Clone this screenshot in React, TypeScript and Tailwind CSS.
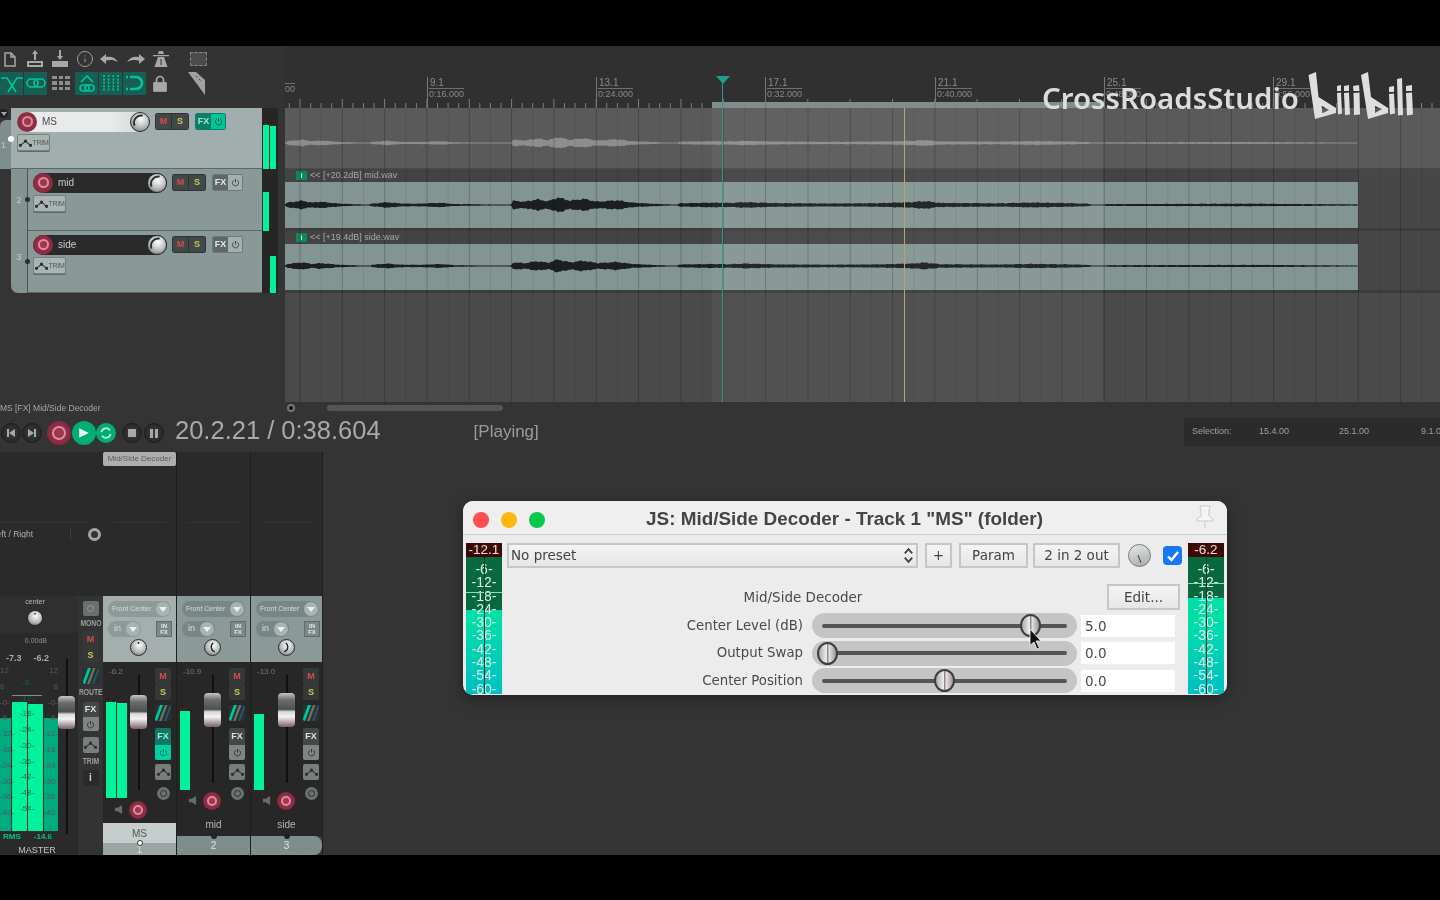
import React from "react";
import { Info } from "lucide-react";

const ENV: [number, number][] = [
  [285, 0],[287, 2.5],[302, 4.5],[312, 2.5],[320, 3.5],[340, 1.5],[362, 0.6],[368, 0],[372, 1.5],[388, 3],[400, 1.6],[420, 1.4],[440, 2.4],[455, 1],[505, 0.5],[511, 0],[513, 4.5],[525, 3.5],[537, 6],[548, 4],[558, 8],[570, 4.5],[583, 6.5],[598, 3.5],[617, 5],[632, 2.5],[660, 1],[672, 0.6],[677, 0],[679, 1.8],[713, 2.5],[730, 2.2],[745, 3],[775, 2],[830, 1.6],[860, 1.8],[880, 2],[912, 3],[925, 4.2],[940, 2.2],[1000, 1.8],[1030, 2.6],[1060, 2.2],[1088, 1.4],[1095, 0],[1104, 0],[1106, 1],[1180, 1.2],[1250, 1.4],[1300, 1],[1358, 0.7],
];
function ampAt(x: number) {
  for (let i = 1; i < ENV.length; i++) {
    if (x <= ENV[i][0]) {
      const [a, av] = ENV[i - 1];
      const [b, bv] = ENV[i];
      return av + ((bv - av) * (x - a)) / (b - a);
    }
  }
  return 0;
}
function wavePath(seed: number, scale: number, mid: number) {
  const top: string[] = [];
  const bottom: string[] = [];
  for (let x = 285; x <= 1358; x += 1.5) {
    const n = 0.85 + 0.15 * Math.sin(x * 0.9 + seed) * Math.cos(x * 0.37 + seed * 2);
    const a = Math.max(ampAt(x) * scale * n, 0.45);
    top.push(`${(x - 285).toFixed(1)} ${(mid - a).toFixed(1)}`);
    bottom.unshift(`${(x - 285).toFixed(1)} ${(mid + a * 0.95).toFixed(1)}`);
  }
  return "M" + top.join("L") + "L" + bottom.join("L") + "Z";
}
function gridPaths() {
  let major = "";
  let minor = "";
  for (let i = 0; i < 28; i++) {
    const x = 15 + i * 42.33;
    major += `M${x.toFixed(1)} 0V294`;
    minor += `M${(x + 21.16).toFixed(1)} 0V294`;
  }
  return { major, minor };
}
function rulerTicks() {
  let t = "";
  for (let i = 0; i < 110; i++) {
    const x = 4.4 + i * 10.58;
    const tall = i % 4 === 1;
    t += `M${x.toFixed(1)} ${tall ? 21 : 25}V30`;
  }
  return t;
}

const Knob = ({ className, dark, arc }: { className: string; dark?: boolean; arc?: "l" | "r" | "t" }) => (
  <div className={`rounded-full shrink-0 border border-[#2a2a2a] bg-[radial-gradient(circle_at_55%_35%,#ffffff,#b4b8b8_55%,#5d6161)] ${className}`}>
    <svg viewBox="0 0 20 20" className="w-full h-full">
      {arc === "l" && <path d="M11 4A6.5 6.5 0 0 0 13 15.5" fill="none" stroke="#222" strokeWidth="1.8" />}
      {arc === "r" && <path d="M9 4A6.5 6.5 0 0 1 7 15.5" fill="none" stroke="#222" strokeWidth="1.8" />}
      {arc === "t" && <circle cx="10" cy="4" r="1.2" fill="#222" />}
      {dark && <path d="M4 14A8 8 0 0 1 13 3" fill="none" stroke="#2a2a2a" strokeWidth="2" />}
    </svg>
  </div>
);

const Rec = ({ className }: { className: string }) => (
  <div className={`rounded-full shrink-0 bg-[radial-gradient(circle,#a33a56,#7c2036)] flex items-center justify-center ${className}`}>
    <div className="w-[55%] h-[55%] rounded-full border-2 border-[#dd8d9f]" />
  </div>
);

const MS = () => (
  <div className="flex rounded-[2px] overflow-hidden border border-[#2d3433] font-bold text-[9px] leading-none shrink-0">
    <div className="w-4 h-[15px] bg-[#414847] text-[#d94a4a] flex items-center justify-center border-r border-[#2d3433]">M</div>
    <div className="w-4 h-[15px] bg-[#414847] text-[#cfc655] flex items-center justify-center">S</div>
  </div>
);

const Power = ({ color }: { color: string }) => (
  <svg viewBox="0 0 10 10" className="w-[9px] h-[9px]" fill="none" stroke={color} strokeWidth="1.1">
    <path d="M3 2.6A3.4 3.4 0 1 0 7 2.6M5 1V5" />
  </svg>
);

const FxBtn = ({ on }: { on?: boolean }) => (
  <div className={`flex rounded-[2px] overflow-hidden font-bold text-[9px] leading-none border shrink-0 ${on ? "border-[#0a7f67]" : "border-[#6d7a78]"}`}>
    <div className={`w-[15px] h-[15px] flex items-center justify-center ${on ? "bg-[#0b7f66] text-[#a6e8d8]" : "bg-[#5e6867] text-[#e5e9e8]"}`}>FX</div>
    <div className={`w-[14px] h-[15px] flex items-center justify-center ${on ? "bg-[#00c49a]" : "bg-[#a4afae]"}`}>
      <Power color={on ? "#075b4a" : "#3f4645"} />
    </div>
  </div>
);

const TrimIcon = () => (
  <svg viewBox="0 0 14 8" className="w-[13px] h-[8px]" fill="none" stroke="#2d3130" strokeWidth="1.1">
    <path d="M1 7L7 2L13 7" />
    <circle cx="1.5" cy="6.5" r="1.2" fill="#2d3130" />
    <circle cx="7" cy="2" r="1.2" fill="#2d3130" />
    <circle cx="12.5" cy="6.5" r="1.2" fill="#2d3130" />
  </svg>
);

const Trim = () => (
  <div className="w-[33px] h-[17px] rounded-[2px] bg-[#a9b4b3] border border-[#748280] shadow-[0_1px_0_#5d6a68] flex items-center justify-center gap-[1px] text-[7px] text-[#4e5655] leading-none">
    <TrimIcon />
    <span className="tracking-[-0.3px]">TRIM</span>
  </div>
);

const TrackRow = ({ name, num, sel, meter }: { name: string; num: string; sel?: boolean; meter: React.ReactNode }) => (
  <div className={`flex relative ${sel ? "h-[61px]" : "h-[62px]"}`}>
    {sel ? (
      <>
        <div className="absolute left-[-1px] top-[1px] w-[9px] h-[9px] rounded-full bg-[#1f1f1f] flex items-center justify-center">
          <div className="w-0 h-0 border-x-[3px] border-x-transparent border-t-[4px] border-t-[#a5a5a5]" />
        </div>
        <div className="w-[11px] mt-[12px] bg-[#7e8e8c] rounded-tl-[6px] flex flex-col text-[9px] text-[#c3cccb] pt-[19px] pl-[1px]">
          <span>{num}</span>
        </div>
        <div className="absolute left-[8px] top-[28px] w-[6px] h-[6px] rounded-full bg-white" />
      </>
    ) : (
      <>
        <div className="w-[11px] shrink-0" />
        <div className={`w-[17px] shrink-0 bg-[#83938f] border-r border-[#4b5553] flex flex-col items-center text-[9px] text-[#c6cfcd] ${num === "2" ? "pt-[25px]" : "pt-[20px] rounded-bl-[7px]"}`}>
          <span>{num}</span>
        </div>
        <div className="absolute left-[25px] top-[28px] w-[5px] h-[5px] rounded-full bg-[#2a2f2e]" />
      </>
    )}
    <div className={`flex-1 border-b border-[#5b6765] ${sel ? "bg-[#a2aead] pl-[6px] pt-[3px]" : "bg-[#899997] pl-[5px] pt-[3px]"}`}>
      <div className="flex items-center h-[21px]">
        <div className={`flex items-center rounded-full h-[20px] ${sel ? "w-[133px] bg-[linear-gradient(90deg,#e9eaea_70%,#d9dbdb_90%,#a2aead)] text-[#4b4b4b]" : "w-[134px] bg-[#2a2a2a] text-[#c9cccc]"}`}>
          <Rec className="w-[20px] h-[20px]" />
          <span className="text-[10px] ml-[5px] flex-1">{name}</span>
          <Knob className="w-[20px] h-[20px]" dark />
        </div>
        <div className="flex items-center gap-[6px] ml-[5px]">
          <MS />
          <FxBtn on={sel} />
        </div>
      </div>
      <div className="mt-[2px]">
        <Trim />
      </div>
    </div>
    <div className="w-[16px] shrink-0 bg-[#262626] flex items-end gap-[1px] pl-[1px] overflow-hidden">{meter}</div>
    <div className="w-[7px] shrink-0" />
  </div>
);

const Bright = ({ className }: { className: string }) => <div className={`w-[6px] bg-[#00f29a] ${className}`} />;

const TB = ({ on, children }: { on?: boolean; children: React.ReactNode }) => (
  <div className={`w-[23px] h-[23px] flex items-center justify-center shrink-0 ${on ? "bg-[#175f53]" : ""}`}>{children}</div>
);

const Toolbar = () => (
  <div className="h-[62px] bg-[#333333] text-[#a8a8a8] pt-[4px] relative">
    <div className="flex items-center h-[18px]">
      <div className="w-[20px] flex justify-center shrink-0">
        <svg viewBox="0 0 12 15" className="w-[12px] h-[15px]" fill="none" stroke="#a8a8a8" strokeWidth="1.5"><path d="M1 1h6l4 4v9H1zM7 1v4h4" /></svg>
      </div>
      <div className="w-[30px] flex justify-center shrink-0">
        <svg viewBox="0 0 18 18" className="w-[18px] h-[18px]" fill="#a8a8a8"><path fillRule="evenodd" d="M9 0l3 4h-2v6H8V4H6zM1 11h16v6H1zM3 13v2h12v-2z" /></svg>
      </div>
      <div className="w-[20px] flex justify-center shrink-0">
        <svg viewBox="0 0 18 18" className="w-[18px] h-[18px]" fill="#a8a8a8"><path d="M8 0h2v6h2l-3 4-3-4h2zM1 11h16v6H1z" /></svg>
      </div>
      <div className="w-[30px] flex justify-center shrink-0"><Info size={18} strokeWidth={1.2} /></div>
      <div className="w-[18px] flex justify-center shrink-0">
        <svg viewBox="0 0 18 12" className="w-[18px] h-[12px] shrink-0" fill="#a8a8a8"><path d="M0 6L6 1V4C11 3 15 4 18 9C14 6.500 10 6.500 6 7.500V11Z" /></svg>
      </div>
      <div className="w-[36px] flex justify-center shrink-0">
        <svg viewBox="0 0 18 12" className="w-[18px] h-[12px] shrink-0 -scale-x-100" fill="#a8a8a8"><path d="M0 6L6 1V4C11 3 15 4 18 9C14 6.500 10 6.500 6 7.500V11Z" /></svg>
      </div>
      <div className="w-[14px] flex justify-center shrink-0">
        <svg viewBox="0 0 18 18" className="w-[18px] h-[18px] shrink-0" fill="#a8a8a8"><path fillRule="evenodd" d="M1 5h16v1.200H1zM6 4l1-3h4l1 3zM6 7h6l3.500 10H2.500zM8.500 9v6h1V9z" /></svg>
      </div>
      <div className="w-[17px] h-[14px] ml-[22px] bg-[#4b4b4b] border border-dashed border-[#8c8c8c] rounded-[1px] shrink-0" />
    </div>
    <div className="flex items-center mt-[3px] h-[24px]">
      <TB on>
        <svg viewBox="0 0 22 22" className="w-[22px] h-[22px]" fill="none" stroke="#00c79a" strokeWidth="1.6"><path d="M0 6h6l9 14M22 6h-6L7 20" /></svg>
      </TB>
      <div className="w-[1px]" />
      <TB on>
        <svg viewBox="0 0 22 22" className="w-[22px] h-[22px]" fill="none" stroke="#00c79a" strokeWidth="1.6"><rect x="2" y="7" width="11" height="8" rx="4" /><rect x="9" y="7" width="11" height="8" rx="4" /></svg>
      </TB>
      <div className="w-[5px]" />
      <div className="w-[18px] h-[14px] grid grid-cols-3 gap-[2px] shrink-0">
        {Array.from({ length: 9 }).map((_, i) => <div key={i} className="bg-[#8e8e8e]" />)}
      </div>
      <div className="w-[5px]" />
      <TB on>
        <svg viewBox="0 0 22 22" className="w-[22px] h-[22px]" fill="none" stroke="#00c79a" strokeWidth="1.6"><path d="M5 10l6-6 6 6" /><rect x="4" y="13" width="9" height="6" rx="3" /><rect x="9" y="13" width="9" height="6" rx="3" /></svg>
      </TB>
      <div className="w-[1px]" />
      <TB on>
        <svg viewBox="0 0 22 22" className="w-[22px] h-[22px]" stroke="#00c79a" strokeWidth="1.6" strokeDasharray="2 1.4"><path d="M4 3v16M8.600 3v16M13.300 3v16M18 3v16" /></svg>
      </TB>
      <div className="w-[1px]" />
      <TB on>
        <svg viewBox="0 0 22 22" className="w-[22px] h-[22px]" fill="none" stroke="#00c79a" strokeWidth="2.600"><path d="M6 5h6a6 6 0 0 1 0 12H6" /><path d="M2 5h2M2 17h2" /></svg>
      </TB>
      <div className="w-[2px]" />
      <div className="w-[23px] flex justify-center shrink-0">
        <svg viewBox="0 0 14 17" className="w-[14px] h-[17px]" fill="none" stroke="#a8a8a8" strokeWidth="1.700"><path d="M3.500 8V5a3.500 3.500 0 0 1 7 0v3" /><rect x="1" y="8" width="12" height="8" fill="#a8a8a8" /></svg>
      </div>
      <div className="w-[16px]" />
      <svg viewBox="0 0 19 25" className="w-[19px] h-[25px] shrink-0" fill="#a0a0a0"><path d="M1 1H9L18 9V24Z" /><path d="M9 5l1.500 1.500M12 8l1.500 1.500" stroke="#444" strokeWidth="1" /></svg>
    </div>
  </div>
);

const Ruler = () => {
  const marks = [
    ["9.1", "0:16.000", 142],
    ["13.1", "0:24.000", 311],
    ["17.1", "0:32.000", 480],
    ["21.1", "0:40.000", 650],
    ["25.1", "0:48.000", 819],
    ["29.1", "0:56.000", 988],
  ] as const;
  return (
    <div className="h-[62px] bg-[#303030] relative overflow-hidden">
      <svg className="absolute left-0 bottom-0 w-full h-[30px]" viewBox="0 0 1155 30" preserveAspectRatio="none">
        <path d={rulerTicks()} stroke="#7d7d7d" strokeWidth="1" fill="none" />
        <rect x="427" y="24" width="391" height="6" fill="#7f8e8c" />
      </svg>
      <div className="absolute left-0 top-[37px] text-[9px] leading-none text-[#8a8a8a] border-t border-[#707070] pt-[1px]">00</div>
      {marks.map(([a, b, x]) => (
        <div key={a} className="absolute top-[31px] bottom-0 border-l border-[#777] pl-[1px] text-[#8a8a8a]" style={{ left: x }}>
          <div className="text-[10px] leading-[11px] border-b border-[#6e6e6e] pl-[1px]">{a}</div>
          <div className="text-[9px] leading-[11px]">{b}</div>
        </div>
      ))}
    </div>
  );
};

const Clip = ({ label, wave }: { label: string; wave: string }) => (
  <div className="h-[62px] bg-[#474747] border-b-[3px] border-[#3c3c3c] flex flex-col">
    <div className="h-[13px] flex items-center pl-[11px] text-[9px] text-[#a8a8a8] bg-[#434343] w-[1073px]">
      <span className="w-[11px] h-[9px] bg-[#0d8a5c] text-[#c9f2e0] text-[7px] leading-[9px] text-center mr-[3px] font-bold">i</span>
      <span>{label}</span>
    </div>
    <div className="w-[1073px] flex-1 bg-[#839593]">
      <svg viewBox="0 0 1073 46" className="w-[1073px] h-[46px] block">
        <path d={wave} fill="#1c1f1f" />
      </svg>
    </div>
  </div>
);

const Arrange = () => {
  const g = gridPaths();
  return (
    <div className="flex-1 bg-[#4a4a4a] relative overflow-hidden">
      <div className="h-[61px] bg-[#5a5a5a] border-b border-[#4a4a4a]">
        <svg viewBox="0 0 1073 61" className="w-[1073px] h-[61px] block">
          <path d={wavePath(2, 0.85, 35)} fill="#8d8d8d" />
        </svg>
      </div>
      <Clip label="<< [+20.2dB] mid.wav" wave={wavePath(1, 1.1, 23)} />
      <Clip label="<< [+19.4dB] side.wav" wave={wavePath(4, 0.95, 22)} />
      <svg className="absolute left-0 top-0 w-[1155px] h-[294px]" viewBox="0 0 1155 294">
        <path d={g.minor} stroke="#000" strokeOpacity="0.08" strokeWidth="1" />
        <path d={g.major} stroke="#000" strokeOpacity="0.22" strokeWidth="1" />
        <rect x="427" y="0" width="391" height="294" fill="#fff" fillOpacity="0.045" />
      </svg>
      <div className="absolute left-[619px] top-0 bottom-0 w-[1px] bg-[#b8a75c]" />
    </div>
  );
};

const TBtn = ({ children, className }: { children: React.ReactNode; className?: string }) => (
  <div className={`w-[20px] h-[20px] rounded-full bg-[radial-gradient(circle,#3a3a3a,#232323)] border border-[#1c1c1c] flex items-center justify-center ${className ?? ""}`}>{children}</div>
);

const Transport = () => (
  <div className="h-[38px] flex items-center text-[#a8a8a8] relative">
    <div className="flex items-center gap-[1px] ml-[1px]">
      <TBtn><svg viewBox="0 0 10 10" className="w-[10px] h-[10px]" fill="#a8a8a8"><path d="M1 1h2v8H1zM9 1v8L3 5z" /></svg></TBtn>
      <TBtn><svg viewBox="0 0 10 10" className="w-[10px] h-[10px]" fill="#a8a8a8"><path d="M7 1h2v8H7zM1 1v8l6-4z" /></svg></TBtn>
    </div>
    <Rec className="w-[24px] h-[24px] ml-[5px]" />
    <div className="w-[24px] h-[24px] rounded-full bg-[#00ad73] flex items-center justify-center ml-[1px]">
      <svg viewBox="0 0 10 10" className="w-[12px] h-[12px]" fill="#eaf8f2"><path d="M1 1l8 4-8 4z" /></svg>
    </div>
    <div className="w-[20px] h-[20px] rounded-full bg-[#00ad73] flex items-center justify-center ml-[0px]">
      <svg viewBox="0 0 14 14" className="w-[14px] h-[14px]" fill="none" stroke="#b8ecd8" strokeWidth="1.800"><path d="M2.500 6A4.600 4.600 0 0 1 11 4.500M11.500 8A4.600 4.600 0 0 1 3 9.500" /></svg>
    </div>
    <div className="flex items-center gap-[2px] ml-[6px]">
      <TBtn><div className="w-[8px] h-[8px] bg-[#a8a8a8]" /></TBtn>
      <TBtn><div className="w-[8px] h-[9px] border-x-[3px] border-[#a8a8a8]" /></TBtn>
    </div>
    <div className="text-[25.500px] ml-[11px] leading-none text-[#a9a9a9] mb-[4px] shrink-0">20.2.21 / 0:38.604</div>
    <div className="text-[17px] ml-[93px] leading-none text-[#9c9c9c] mb-[4px] shrink-0">[Playing]</div>
    <div className="ml-auto w-[256px] h-[28px] bg-[#2b2b2b] rounded-l-[2px] flex items-center text-[9px] text-[#a0a0a0] pl-[8px] mb-[2px] overflow-hidden whitespace-nowrap">
      <span className="w-[67px] shrink-0">Selection:</span>
      <span className="w-[80px] shrink-0">15.4.00</span>
      <span className="w-[82px] shrink-0">25.1.00</span>
      <span className="shrink-0">9.1.0</span>
    </div>
  </div>
);

const Route = () => (
  <svg viewBox="0 0 16 16" className="w-[16px] h-[16px] rounded-[2px]">
    <rect width="16" height="16" fill="#24323a" />
    <path d="M-1 16L5 0h3L2 16z" fill="#00c79a" />
    <path d="M4 16L10 0h2.500L6.500 16z" fill="#6f7355" />
    <path d="M9 16L15 0h2l-6 16z" fill="#30536b" />
  </svg>
);

const SqBtn = ({ children, c }: { children: React.ReactNode; c: string }) => (
  <div className={`w-[16px] h-[16px] rounded-[2px] bg-[#343837] flex items-center justify-center text-[9px] font-bold leading-none ${c}`}>{children}</div>
);

const Strip = ({ name, num, db, sel, meters, thumbTop, recTop, lineH, arc, fxOn, w, bottomGap, numEnd }: {
  name: string; num: string; db: string; sel?: boolean; meters: React.ReactNode; thumbTop: string; recTop: string; lineH: string; arc: "t" | "l" | "r"; fxOn?: boolean; w: string; bottomGap: string; numEnd?: string;
}) => (
  <div className={`${w} h-full flex flex-col border-r border-[#1e1e1e] shrink-0`}>
    <div className={`h-[144px] bg-[#2a2a2a] ${sel ? "" : "pt-[70px]"}`}>
      {sel && (
        <div className="h-[14px] mb-[56px] bg-[#aeaeae] rounded-[2px] text-[8px] leading-[14px] text-[#5a5a5a] text-center whitespace-nowrap overflow-hidden">Mid/Side Decoder</div>
      )}
      <div className="h-px bg-[#353535] mx-[10px]" />
    </div>
    <div className={`h-[66px] pl-[5px] pt-[5px] ${sel ? "bg-[#a3aead]" : "bg-[#8b9a98]"}`}>
      <div className={`w-[63px] h-[16px] rounded-full flex items-center justify-between pl-[4px] pr-[1px] text-[7px] text-[#d8dddc] whitespace-nowrap ${sel ? "bg-[#8d9a98]" : "bg-[#788785]"}`}>
        <span>Front Center</span>
        <div className="w-[14px] h-[14px] rounded-full bg-[#a9b3b2] flex items-center justify-center">
          <div className="w-0 h-0 border-x-[4px] border-x-transparent border-t-[5px] border-t-[#eef0f0]" />
        </div>
      </div>
      <div className="flex items-center justify-between mt-[4px] w-[64px]">
        <div className={`w-[33px] h-[16px] rounded-full flex items-center justify-between pl-[6px] pr-[1px] text-[9px] text-[#d8dddc] ${sel ? "bg-[#8d9a98]" : "bg-[#788785]"}`}>
          <span>in</span>
          <div className="w-[14px] h-[14px] rounded-full bg-[#a9b3b2] flex items-center justify-center">
            <div className="w-0 h-0 border-x-[4px] border-x-transparent border-t-[5px] border-t-[#eef0f0]" />
          </div>
        </div>
        <div className="w-[16px] h-[16px] bg-[#7a8987] border border-[#5f6c6a] text-[6px] leading-[6px] font-bold text-[#e4e8e7] text-center pt-[1px]">IN<br />FX</div>
      </div>
      <div className="flex justify-center w-[64px] pr-[3px] mt-[2px]">
        <Knob className="w-[17px] h-[17px]" arc={arc} />
      </div>
    </div>
    <div className="flex flex-1 bg-[#272727] relative">
      <div className="w-[27px] pl-[3px] flex flex-col">
        <div className="text-[8px] text-[#777] pl-[3px] pt-[6px] leading-none">{db}</div>
        {meters}
        <div className={`flex justify-center ${sel ? "mt-[6px]" : "mt-[5px]"}`}>
          <svg viewBox="0 0 10 12" className="w-[9px] h-[11px]" fill="#6a6a6a"><path d="M1 4h3l5-3v10L4 8H1z" /></svg>
        </div>
      </div>
      <div className="w-[25px] relative flex flex-col items-center">
        <div className={`w-[2px] bg-[#101010] mt-[13px] ml-[-8px] ${lineH}`} />
        <div className={`absolute left-[0px] w-[17px] h-[34px] rounded-[4px] bg-[linear-gradient(180deg,#c6c6c6,#6a6f6e_20%,#4c504f_48%,#d9d9d9_55%,#f5f1f2_70%,#78606a_100%)] ${thumbTop}`} />
        <div className={`absolute left-[-1px] ${recTop}`}>
          <Rec className="w-[18px] h-[18px]" />
        </div>
      </div>
      <div className="w-[16px] flex flex-col items-center pt-[6px]">
        <SqBtn c="text-[#d94a4a]">M</SqBtn>
        <SqBtn c="text-[#cfc655]">S</SqBtn>
        <div className="mt-[5px]"><Route /></div>
        <div className={`mt-[7px] w-[16px] h-[32px] rounded-[2px] flex flex-col text-[9px] font-bold leading-none ${fxOn ? "bg-[#0e7a65] text-[#a6e8d8]" : "bg-[#434746] text-[#dfe2e1]"}`}>
          <div className="h-[17px] flex items-center justify-center">FX</div>
          <div className={`h-[15px] flex items-center justify-center rounded-b-[2px] ${fxOn ? "bg-[#00cfa0]" : "bg-[#7e8584]"}`}><Power color={fxOn ? "#0a6e5a" : "#333"} /></div>
        </div>
        <div className="mt-[4px] w-[16px] h-[16px] bg-[#777e7d] rounded-[2px] flex items-center justify-center"><TrimIcon /></div>
        <div className="mt-[7px] w-[13px] h-[13px] rounded-full bg-[#6c7271] flex items-center justify-center">
          <div className="w-[7px] h-[7px] rounded-full border border-[#2e2e2e]" />
        </div>
      </div>
    </div>
    <div className={`${bottomGap} flex items-center justify-center text-[10px] shrink-0 ${sel ? "bg-[#c7cccc] text-[#555]" : "bg-[#272727] text-[#b4b4b4]"}`}>{name}</div>
    <div className={`${sel ? "h-[12px] bg-[#9aa5a4]" : "h-[19px] bg-[#7f8e8c]"} ${numEnd ?? ""} flex items-center justify-center text-[10px] text-[#dfe5e4] shrink-0 relative`}>
      {num}
      <div className={`absolute top-[-3px] left-1/2 rounded-full -ml-[3px] w-[6px] h-[6px] ${sel ? "bg-white border border-[#333]" : "bg-[#222]"}`} />
    </div>
  </div>
);

const Master = () => {
  const center = ["-6-", "-12-", "-18-", "-24-", "-30-", "-36-", "-42-", "-48-", "-54-"];
  const side = ["12", "6", "-0-", "-6-", "-12-", "-18-", "-24-", "-30-", "-36-", "-42-"];
  return (
    <div className="w-[103px] h-full flex flex-col shrink-0 overflow-hidden">
      <div className="h-[144px] bg-[#2a2a2a] pt-[70px] shrink-0">
        <div className="h-px bg-[#353535] mb-[3px] w-[88px]" />
        <div className="flex items-center text-[8.500px] text-[#b0b0b0] leading-none h-[16px] whitespace-nowrap">
          <div className="w-[70px] shrink-0">
            <div className="w-[33px] overflow-hidden flex justify-end"><span className="shrink-0">eft / Right</span></div>
          </div>
          <div className="w-px h-[12px] bg-[#3d3d3d] shrink-0" />
          <div className="w-[13px] h-[13px] rounded-full border-[3px] border-[#a4a4a4] bg-[#333] ml-[17px] shrink-0" />
        </div>
      </div>
      <div className="flex-1 flex min-h-0">
        <div className="w-[78px] bg-[#2f2f2f] flex flex-col items-center shrink-0">
          <div className="text-[7px] text-[#b9b9b9] mt-[2px] leading-none w-full text-center pr-[8px]">center</div>
          <div className="mr-[8px] mt-[5px]"><Knob className="w-[16px] h-[16px]" arc="t" /></div>
          <div className="w-full flex-1 bg-[#2a2a2a] mt-[7px] flex">
            <div className="w-[58px] flex flex-col relative">
              <div className="text-[7px] text-[#8f8f8f] text-right pr-[11px] leading-none pt-[4px]">0.00dB</div>
              <div className="flex justify-between pl-[6px] pr-[9px] text-[9px] font-bold text-[#a9a9a9] leading-none mt-[10px]">
                <span>-7.3</span><span>-6.2</span>
              </div>
              <div className="relative h-[168px] mt-[0px] flex items-end">
                <div className="w-[11px] h-[113px] bg-[#00ab7e]" />
                <div className="w-[15px] h-[129px] bg-[#00f29a] ml-[1px]" />
                <div className="w-[15px] h-[127px] bg-[#00f29a] ml-[1px]" />
                <div className="w-[14px] h-[113px] bg-[#00ab7e] ml-[1px]" />
                <div className="absolute left-[12px] top-[32px] w-[30px] h-px bg-[#8a8a8a]" />
                <div className="absolute left-[15px] w-[24px] top-[12px] flex flex-col text-[8px] text-[#0b6a4e] leading-[15.7px] text-center">
                  {center.map((s) => <span key={s}>{s}</span>)}
                </div>
                <div className="absolute left-0 top-0 flex flex-col text-[8px] text-[#585858] leading-[15.8px]">
                  {side.map((s) => <span key={s}>{s}</span>)}
                </div>
                <div className="absolute right-[0px] top-0 flex flex-col items-end text-[8px] text-[#585858] leading-[15.8px]">
                  {side.map((s) => <span key={s}>{s}</span>)}
                </div>
              </div>
              <div className="flex justify-between text-[8px] font-bold text-[#00c488] px-[3px] pr-[6px] leading-none mt-[2px]">
                <span>RMS</span><span>-14.6</span>
              </div>
              <div className="text-[9px] text-[#c2c2c2] text-center leading-none mt-[5px] pl-[16px]">MASTER</div>
            </div>
            <div className="w-[20px] relative flex justify-center">
              <div className="w-[2px] h-[175px] bg-[#101010] mt-[26px] -ml-[3px]" />
              <div className="absolute left-0 top-[63px] w-[17px] h-[33px] rounded-[4px] bg-[linear-gradient(180deg,#c6c6c6,#6a6f6e_20%,#4c504f_48%,#d9d9d9_55%,#f5f1f2_70%,#78606a_100%)]" />
            </div>
          </div>
        </div>
        <div className="w-[25px] bg-[#333333] flex flex-col items-center pt-[5px] text-[9px] text-[#9a9f9e] font-bold leading-none shrink-0">
          <div className="w-[16px] h-[15px] bg-[#6a706f] rounded-[2px] flex items-center justify-center">
            <div className="w-[7px] h-[7px] rounded-full border border-[#999]" />
          </div>
          <div className="mt-[3px] scale-x-75">MONO</div>
          <div className="mt-[3px]"><SqBtn c="text-[#d94a4a]">M</SqBtn></div>
          <SqBtn c="text-[#cfc655]">S</SqBtn>
          <div className="mt-[5px]"><Route /></div>
          <div className="mt-[4px] scale-x-75">ROUTE</div>
          <div className="mt-[5px] w-[16px] h-[29px] rounded-[2px] bg-[#434746] text-[#dfe2e1] flex flex-col">
            <div className="h-[15px] flex items-center justify-center">FX</div>
            <div className="h-[14px] bg-[#7e8584] rounded-b-[2px] flex items-center justify-center"><Power color="#333" /></div>
          </div>
          <div className="mt-[6px] w-[16px] h-[16px] bg-[#777e7d] rounded-[2px] flex items-center justify-center"><TrimIcon /></div>
          <div className="mt-[4px] scale-x-75">TRIM</div>
          <div className="mt-[4px] w-[16px] h-[16px] bg-[#2a2a2a] rounded-[2px] flex items-center justify-center text-[#d0d0d0] text-[10px]">i</div>
        </div>
      </div>
    </div>
  );
};

const scale = ["-6-", "-12-", "-18-", "-24-", "-30-", "-36-", "-42-", "-48-", "-54-", "-60-"];

const PMeter = ({ peak, darkH, line }: { peak: string; darkH: string; line: string }) => (
  <div className="w-[36px] h-[151px] flex flex-col relative overflow-hidden shrink-0 bg-[linear-gradient(180deg,#00e0a6,#00e0a6_50%,#00bfc4)] font-['Liberation_Sans',sans-serif]">
    <div className="h-[14px] bg-[#3c0905] text-[#f0dcd8] text-[13.500px] leading-[14px] text-center shrink-0 relative">{peak}</div>
    <div className={`${darkH} bg-[#08693f] shrink-0`} />
    <div className="absolute inset-x-0 top-[20px] flex flex-col text-[14px] leading-[13.3px] text-center text-[#dcefe9]">
      {scale.map((s) => <span key={s}>{s}</span>)}
    </div>
    <div className={`absolute inset-x-0 h-px bg-[#8fd8c4] ${line}`} />
    <div className="absolute left-[18px] top-[14px] bottom-0 w-px bg-[#0a3d30]" />
  </div>
);

const Box = ({ className, children }: { className: string; children: React.ReactNode }) => (
  <div className={`h-[25px] border-2 border-[#c6c6c6] bg-[linear-gradient(180deg,#f4f4f4,#e6e6e6)] flex items-center justify-center text-[#444] shrink-0 ${className}`}>{children}</div>
);

const Slider = ({ label, value, thumb }: { label: string; value: string; thumb: string }) => (
  <div className="flex items-center h-[27.500px]">
    <div className="w-[296px] text-right text-[#4a4a4a] text-[13.300px]">{label}</div>
    <div className="ml-[9px] w-[265px] h-[25px] rounded-full bg-[#c5c5c5] px-[10px] flex items-center relative shrink-0">
      <div className="h-[4px] w-full bg-[#555] rounded-full" />
      <div className={`absolute top-[1px] w-[21px] h-[23px] rounded-[50%] border-2 border-[#3e3e3e] bg-[linear-gradient(90deg,#aaa,#eee_45%,#888_50%,#e8dfe2_60%,#999)] ${thumb}`} />
    </div>
    <div className="ml-[4px] w-[94px] h-[22px] bg-white pl-[4px] flex items-center text-[#4a4a4a]">{value}</div>
  </div>
);

const Plugin = () => (
  <div className="absolute left-[463px] top-[455px] w-[764px] h-[194px] bg-[#ececec] rounded-[10px] overflow-hidden shadow-[0_4px_14px_rgba(0,0,0,0.35)] text-[13.500px] font-['DejaVu_Sans',sans-serif]">
    <div className="h-[34px] border-b border-[#cfcfcf] bg-[#efefef] relative flex items-center justify-center">
      <div className="absolute left-[10px] top-[11px] flex gap-[12px]">
        <div className="w-[16px] h-[16px] rounded-full bg-[#ff4d52]" />
        <div className="w-[16px] h-[16px] rounded-full bg-[#ffb60d]" />
        <div className="w-[16px] h-[16px] rounded-full bg-[#06c94e]" />
      </div>
      <div className="font-bold text-[18.900px] text-[#444] font-['Liberation_Sans',sans-serif] pt-[3px] pr-[1px]">JS: Mid/Side Decoder - Track 1 "MS" (folder)</div>
      <svg viewBox="0 0 22 26" className="absolute right-[11px] top-[3px] w-[22px] h-[26px]" fill="#f6f6f6" stroke="#c8c8c8" strokeWidth="1"><path d="M6 2h10v2l-1 1v7l4 3v2H3v-2l4-3V5L6 4zM11 17v7" /></svg>
    </div>
    <div className="flex px-[3px] pt-[8px] gap-[1px]">
      <PMeter peak="-12.1" darkH="h-[53px]" line="top-[49px]" />
      <div className="flex-1 flex flex-col px-[4px]">
        <div className="flex items-center">
          <Box className="w-[411px] !justify-between pl-[2px] pr-[2px]">
            <span>No preset</span>
            <svg viewBox="0 0 10 16" className="w-[11px] h-[17px]" fill="none" stroke="#444" strokeWidth="1.8"><path d="M1.500 6L5 2l3.500 4M1.500 10L5 14l3.500-4" /></svg>
          </Box>
          <Box className="w-[27px] ml-[7px]">+</Box>
          <Box className="w-[69px] ml-[7px]">Param</Box>
          <Box className="w-[87px] ml-[5px]">2 in 2 out</Box>
          <div className="ml-[8px] w-[23px] h-[23px] rounded-full bg-[linear-gradient(160deg,#e6e8e8,#a5aaaa)] border border-[#777] flex items-center justify-center shrink-0">
            <div className="w-px h-[8px] bg-[#444] mt-[7px] -rotate-[20deg]" />
          </div>
          <div className="ml-[12px] w-[19px] h-[19px] rounded-[4px] bg-[#1877f5] flex items-center justify-center shrink-0">
            <svg viewBox="0 0 14 14" className="w-[14px] h-[14px]" fill="none" stroke="#fff" strokeWidth="2.400"><path d="M2 7.500L5.500 11 12 3" /></svg>
          </div>
        </div>
        <div className="flex items-center h-[26px] mt-[16px] text-[#4a4a4a]">
          <div className="w-[592px] text-center">Mid/Side Decoder</div>
          <Box className="w-[73px] ml-[8px] h-[26px]">Edit...</Box>
        </div>
        <div className="mt-[2px]">
          <Slider label="Center Level (dB)" value="5.0" thumb="left-[208px]" />
          <Slider label="Output Swap" value="0.0" thumb="left-[5px]" />
          <Slider label="Center Position" value="0.0" thumb="left-[122px]" />
        </div>
      </div>
      <PMeter peak="-6.2" darkH="h-[41px]" line="top-[40px]" />
    </div>
    <svg viewBox="0 0 14 22" className="absolute left-[566px] top-[127px] w-[14px] h-[22px]" fill="#111" stroke="#fff" strokeWidth="0.8"><path d="M1 1l11 12H7l3.500 7-2.500 1.200L5 14l-4 3.500z" /></svg>
  </div>
);

const Watermark = () => (
  <div className="absolute left-[1042px] top-[26px] flex items-start text-[#dcdcdc] pointer-events-none">
    <div className="text-[29.400px] font-semibold leading-none mt-[12px] w-[267px] whitespace-nowrap font-['Noto_Sans',sans-serif]">CrossRoadsStudio</div>
    <svg viewBox="-1 0 106 47" className="w-[106px] h-[47px] -ml-[1px] overflow-visible" fill="#dedede">
      <path fillRule="evenodd" d="M-0.500 3L7 0L9.500 25L27 36V41L6 47ZM12.700 33.700L13.300 41.300L20 38Z" />
      <path d="M28 14l4-1v6h-4zM28 21l4-.5 1 21-4 1zM35 14l5-1v6h-5zM35 21l5-.5 1 22-5 .5zM44 14l6-1 .5 6h-6zM44.500 21l6-.5.5 22-6 .5z" />
      <path fillRule="evenodd" d="M52 3L59 0L62 25L79 36V41L59 47ZM66 34L66 41L73 37Z" />
      <path d="M80 15l5-1v6h-5zM80 22l5-.5 1 20-5 1zM88 7l5-1 1 37-5 .5zM97 14l6-1v6h-6zM97 21l6-.5 1 22-6 1z" />
    </svg>
  </div>
);

export default function App() {
  return (
    <div className="w-[1440px] h-[900px] bg-black flex flex-col overflow-hidden font-['Liberation_Sans',sans-serif] blur-[0.3px]">
      <div className="h-[46px] shrink-0" />
      <div className="h-[809px] bg-[#343434] flex flex-col relative overflow-hidden">
        <div className="h-[356px] flex shrink-0 relative">
          <div className="w-[285px] flex flex-col shrink-0">
            <Toolbar />
            <TrackRow name="MS" num="1" sel meter={<><Bright className="h-[44px]" /><Bright className="h-[43px]" /></>} />
            <TrackRow name="mid" num="2" meter={<Bright className="h-[39px]" />} />
            <TrackRow name="side" num="3" meter={<><div className="w-[6px]" /><Bright className="h-[37px]" /></>} />
          </div>
          <div className="flex-1 flex flex-col">
            <Ruler />
            <Arrange />
          </div>
          <div className="absolute left-[722px] top-[30px] bottom-0 w-px bg-[#2a9d8b]" />
          <div className="absolute left-[716px] top-[30px] w-0 h-0 border-x-[7px] border-x-transparent border-t-[8px] border-t-[#1f9e8a]" />
        </div>
        <div className="h-[12px] shrink-0 flex items-center relative">
          <span className="text-[8.500px] text-[#a6a6a6] w-[285px] whitespace-nowrap">MS [FX] Mid/Side Decoder</span>
          <div className="w-[8px] h-[8px] rounded-full bg-[#111] border-2 border-[#777] ml-[2px]" />
          <div className="w-[176px] h-[6px] rounded-full bg-[#555] ml-[32px]" />
        </div>
        <Transport />
        <div className="flex-1 flex min-h-0">
          <Master />
          <Strip w="w-[74px]" name="MS" num="1" db="-6.2" sel thumbTop="top-[33px]" recTop="top-[139px]" lineH="h-[115px]" arc="t" fxOn bottomGap="h-[20px]"
            meters={<div className="flex gap-px mt-[26px]"><div className="w-[10px] h-[96px] bg-[#00f29a]" /><div className="w-[10px] h-[95px] mt-[1px] bg-[#00f29a]" /></div>} />
          <Strip w="w-[74px]" name="mid" num="2" db="-10.9" thumbTop="top-[31px]" recTop="top-[130px]" lineH="h-[108px]" arc="l" bottomGap="h-[24px]"
            meters={<div className="mt-[35px]"><div className="w-[10px] h-[79px] bg-[#00f29a]" /></div>} />
          <Strip w="w-[72px]" name="side" num="3" db="-13.0" thumbTop="top-[31px]" recTop="top-[130px]" lineH="h-[108px]" arc="r" bottomGap="h-[24px]" numEnd="rounded-r-[8px]"
            meters={<div className="mt-[38px]"><div className="w-[10px] h-[76px] bg-[#00f29a]" /></div>} />
        </div>
        <Plugin />
        <Watermark />
      </div>
      <div className="h-[45px] shrink-0" />
    </div>
  );
}
